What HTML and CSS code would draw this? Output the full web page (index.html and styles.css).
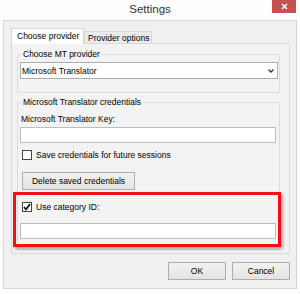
FILE: index.html
```html
<!DOCTYPE html>
<html lang="en">
<head>
  <meta charset="UTF-8" />
  <title>Settings</title>
  <meta name="viewport" content="width=device-width, initial-scale=1.0" />
  <link rel="stylesheet" href="styles.css">
</head>
<body>
  <div class="window">
    <div class="titlebar">
      <span class="title">Settings</span>
      <button class="close" aria-label="Close">
        <svg width="7" height="7" viewBox="0 0 7 7"><path d="M1 1L6 6M6 1L1 6" stroke="#fff" stroke-width="1.5"/></svg>
      </button>
    </div>

    <div class="client">
      <div class="tabs">
        <div class="tab active">Choose provider</div>
        <div class="tab">Provider options</div>
      </div>

      <div class="panel">
        <fieldset class="group group-provider">
          <legend>Choose MT provider</legend>
          <div class="combo">
            <span>Microsoft Translator</span>
            <svg width="6" height="4" viewBox="0 0 6 4"><path d="M0.5 0.5L3 3L5.5 0.5" fill="none" stroke="#333" stroke-width="1.3"/></svg>
          </div>
        </fieldset>

        <fieldset class="group group-creds">
          <legend>Microsoft Translator credentials</legend>
          <div class="field-label">Microsoft Translator Key:</div>
          <div class="textbox"></div>
          <label class="check save-check"><span class="box"></span>Save credentials for future sessions</label>
          <button class="btn btn-delete">Delete saved credentials</button>

          <!-- red annotation round the category option -->
          <div class="highlight">
            <label class="check"><span class="box"><svg width="8" height="8" viewBox="0 0 8 8"><path d="M1 4L3 6.5L7 1" fill="none" stroke="#000" stroke-width="1.6"/></svg></span>Use category ID:</label>
            <div class="textbox category-box"></div>
          </div>
        </fieldset>
      </div>

      <div class="actions">
        <button class="btn">OK</button>
        <button class="btn">Cancel</button>
      </div>
    </div>
  </div>
</body>
</html>
```

FILE: styles.css
```css
* {
  box-sizing: border-box;
}

body {
  margin: 0;
  background: #fff;
  font-family: "Liberation Sans", Arial, sans-serif;
  font-size: 8.5px;
  color: #000;
}

.window {
  width: 300px;
  height: 294px;
  background: #fdfdfd;
}

.titlebar {
  height: 20px;
  display: grid;
  grid-template-columns: 1fr auto 1fr;
}

.title {
  grid-column: 2;
  font-size: 11.5px;
  line-height: 19px;
  color: #333;
}

.close {
  grid-column: 3;
  justify-self: end;
  align-self: start;
  width: 24px;
  height: 13px;
  margin-right: 4px;
  padding: 0;
  border: 0;
  background: #c75050;
  display: flex;
  align-items: center;
  justify-content: center;
}

.client {
  margin-left: 3px;
  width: 294px;
  height: 269px;
  border: 1px solid #d6d6d6;
  background: #f0f0f0;
  padding: 7px 6px 0 7px;
}

/* tabs */
.tabs {
  display: flex;
  align-items: flex-end;
}

.tab {
  height: 12px;
  width: 68px;
  padding-left: 3px;
  line-height: 12px;
  border: 1px solid #d9d9d9;
  border-bottom: 0;
  background: #ebebeb;
  white-space: nowrap;
}

.tab.active {
  position: relative;
  z-index: 1;
  height: 16px;
  width: 73px;
  margin-bottom: -1px;
  padding-left: 5px;
  line-height: 15px;
  background: #fff;
}

.panel {
  height: 211px;
  border: 1px solid #d9d9d9;
  background: #f3f3f3;
  padding: 5px 9px 3px 5px;
}

/* group boxes */
.group {
  margin: 0;
  min-width: 0;
  border: 1px solid #dcdcdc;
  border-radius: 2px;
}

.group legend {
  margin-left: 2px;
  padding: 0 1px;
  line-height: 10px;
}

.group-provider {
  padding: 3px 1px 13px 2px;
}

.group-creds {
  margin-top: 4px;
  padding: 7px 3px 2px 2px;
}

.combo {
  height: 17px;
  border: 1px solid #acacac;
  background: #fff;
  display: flex;
  align-items: center;
  justify-content: space-between;
  padding: 0 3px 0 1px;
}

.field-label {
  padding-left: 1px;
  line-height: 10px;
}

.textbox {
  height: 16px;
  margin-top: 3px;
  border: 1px solid #bdbdbd;
  background: #fff;
}

.check {
  display: flex;
  align-items: center;
  gap: 4px;
  margin-left: 2px;
  line-height: 10px;
}

.save-check {
  margin-top: 7px;
}

.box {
  width: 10px;
  height: 10px;
  border: 1px solid #444;
  background: #fff;
  display: flex;
  align-items: center;
  justify-content: center;
}

.btn {
  display: block;
  height: 18px;
  padding: 0;
  border: 1px solid #adadad;
  background: linear-gradient(#f2f2f2, #e3e3e3);
  font: inherit;
  color: #000;
}

.btn-delete {
  width: 113px;
  margin: 12px 0 0 2px;
}

.highlight {
  margin: 2px -5px 0 -7px;
  padding: 7px 2px 5px 4px;
  border: 3px solid #f21010;
  box-shadow: 2px 2px 3px rgba(0, 0, 0, 0.35);
}

.category-box {
  margin-top: 11px;
}

.actions {
  display: flex;
  justify-content: flex-end;
  gap: 6px;
  margin-top: 8px;
}

.actions .btn {
  width: 58px;
}
```
